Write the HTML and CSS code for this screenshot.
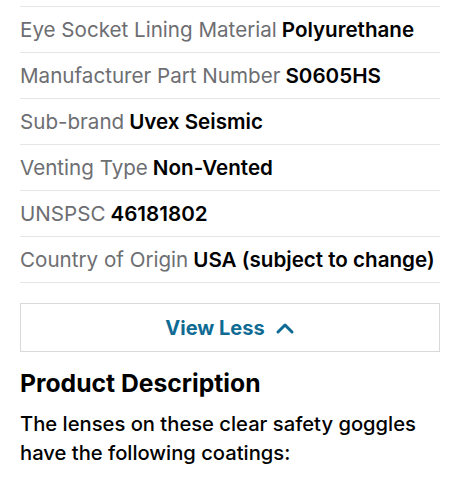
FILE: index.html
```html
<!DOCTYPE html>
<html lang="en">
<head>
    <meta charset="UTF-8">
    <meta name="viewport" content="width=device-width, initial-scale=1.0">
    <title>Specifications</title>
    <link rel="stylesheet" href="styles.css">
</head>
<body>
    <div class="specs">
        <div class="spec-row"><span class="label">Eye Socket Lining Material</span> <span class="value">Polyurethane</span></div>
        <div class="spec-row"><span class="label">Manufacturer Part Number</span> <span class="value">S0605HS</span></div>
        <div class="spec-row"><span class="label">Sub-brand</span> <span class="value">Uvex Seismic</span></div>
        <div class="spec-row"><span class="label">Venting Type</span> <span class="value">Non-Vented</span></div>
        <div class="spec-row"><span class="label">UNSPSC</span> <span class="value">46181802</span></div>
        <div class="spec-row"><span class="label">Country of Origin</span> <span class="value">USA (subject to change)</span></div>
    </div>

    <button class="toggle">
        View Less
        <svg width="20" height="14" viewBox="0 0 20 14"><path d="M3 11 L10 4 L17 11" fill="none" stroke="currentColor" stroke-width="3" stroke-linecap="round" stroke-linejoin="round"/></svg>
    </button>

    <h2 class="section-title">Product Description</h2>
    <p class="description">The lenses on these clear safety goggles have the following coatings:</p>
</body>
</html>
```

FILE: styles.css
```css
body {
    font-family: Inter, "Noto Sans", sans-serif;
    margin: 0;
    padding: 6px 20px 0;
    background: #fff;
    color: #000;
}
.specs {
    border-top: 1px solid #e6e6e6;
}
.spec-row {
    height: 45px;
    display: flex;
    align-items: center;
    gap: 5px;
    font-size: 20.6px;
    border-bottom: 1px solid #e6e6e6;
}
.label {
    color: #6d6e72;
}
.value {
    font-weight: 600;
}
.toggle {
    display: flex;
    justify-content: center;
    align-items: center;
    gap: 10px;
    width: 100%;
    height: 49px;
    margin-top: 20px;
    background: #fff;
    border: 1px solid #d9d9d9;
    font-family: inherit;
    font-size: 20px;
    font-weight: 700;
    color: #0f6b93;
}
.section-title {
    font-size: 24.7px;
    font-weight: 700;
    margin: 16px 0 0;
}
.description {
    font-size: 20.2px;
    font-weight: 500;
    line-height: 29px;
    margin: 11px 0 0;
}
```
